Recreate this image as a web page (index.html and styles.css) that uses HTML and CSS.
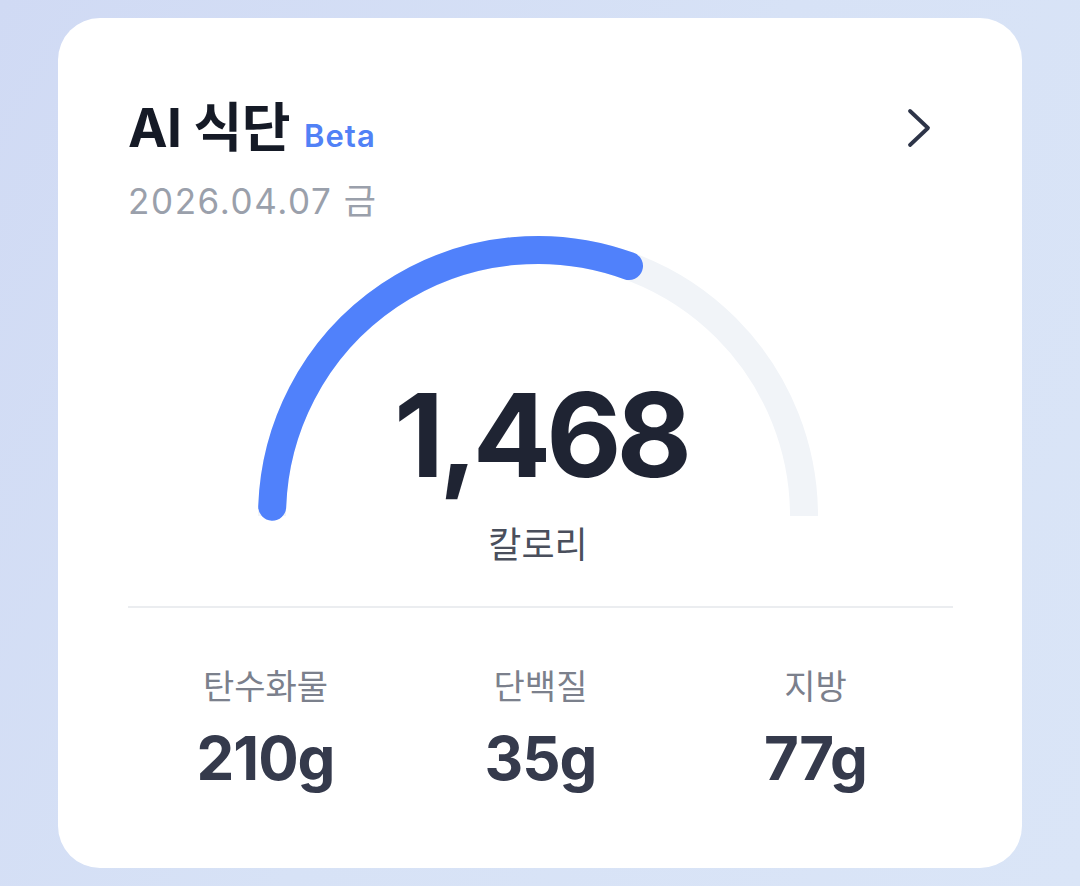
FILE: index.html
```html
<!DOCTYPE html>
<html lang="ko">

<head>
	<meta charset="UTF-8">
	<title>AI 식단</title>
	<link rel="stylesheet" href="styles.css">
</head>

<body>

	<section class="card">
		<header class="cardHead">
			<h1 class="title">AI 식단 <span class="beta">Beta</span></h1>
			<svg class="chevron" width="32" height="44" viewBox="0 0 32 44">
				<path d="M9 5 L27 22 L9 39" fill="none" stroke="#2d3448" stroke-width="3.8" stroke-linecap="round" stroke-linejoin="round" />
			</svg>
		</header>
		<p class="date">2026.04.07 금</p>

		<div class="gauge">
			<svg class="arc" width="580" height="336" viewBox="0 0 580 336">
				<path d="M24 287 A266 266 0 0 1 556 287" fill="none" stroke="#f1f4f8" stroke-width="28" />
				<path d="M24.2 277.7 A266 266 0 0 1 381 37" fill="none" stroke="#5081fb" stroke-width="28" stroke-linecap="round" />
			</svg>
			<div class="reading">
				<span class="kcal">1,468</span>
				<span class="unit">칼로리</span>
			</div>
		</div>

		<div class="divider"></div>

		<ul class="macros">
			<li>
				<span class="macroName">탄수화물</span>
				<span class="macroValue">210g</span>
			</li>
			<li>
				<span class="macroName">단백질</span>
				<span class="macroValue">35g</span>
			</li>
			<li>
				<span class="macroName">지방</span>
				<span class="macroValue">77g</span>
			</li>
		</ul>
	</section>

</body>

</html>
```

FILE: styles.css
```css
* {
	margin: 0;
	padding: 0;
	box-sizing: border-box;
}

body {
	font-family: Inter, "Noto Sans CJK KR", sans-serif;
	width: 1080px;
	height: 886px;
	overflow: hidden;
	padding: 18px 58px;
	background: linear-gradient(120deg, #d0daf4 0%, #d7e2f6 50%, #dae5f7 100%);
}

.card {
	height: 850px;
	background-color: #fff;
	border-radius: 42px;
	padding: 80px 69px 0 70px;
}

.cardHead {
	display: flex;
	align-items: center;
	justify-content: space-between;
	height: 52px;
}

.title {
	font-size: 53px;
	font-weight: 700;
	color: #151a26;
	letter-spacing: -0.5px;
	white-space: nowrap;
}

.beta {
	font-size: 31px;
	font-weight: 600;
	color: #5181f6;
	letter-spacing: 1px;
	margin-left: 2px;
}

.chevron {
	margin-right: 20px;
	margin-top: 8px;
}

.date {
	margin-top: 31px;
	font-size: 35px;
	color: #9aa0ab;
	line-height: 40px;
	letter-spacing: 1.6px;
}

.gauge {
	display: grid;
	width: 580px;
	margin: 8px 0 0 120px;
}

.gauge > * {
	grid-area: 1 / 1;
}

.reading {
	align-self: end;
	display: flex;
	flex-direction: column;
	align-items: center;
}

.kcal {
	font-size: 116px;
	font-weight: 700;
	color: #1f2433;
	line-height: 1;
	letter-spacing: -5px;
	margin-right: -5px;
}

.unit {
	margin-top: 32px;
	font-size: 36px;
	color: #4a4f5c;
	line-height: 40px;
}

.divider {
	height: 2px;
	background-color: #ebedf0;
	margin-top: 41px;
}

.macros {
	list-style: none;
	display: grid;
	grid-template-columns: repeat(3, 1fr);
	margin-top: 59px;
}

.macros li {
	display: flex;
	flex-direction: column;
	align-items: center;
}

.macroName {
	font-size: 34px;
	color: #7b808c;
	line-height: 40px;
}

.macroValue {
	margin-top: 21px;
	font-size: 60px;
	font-weight: 700;
	color: #353a4c;
	line-height: 60px;
	letter-spacing: -1px;
}
```
